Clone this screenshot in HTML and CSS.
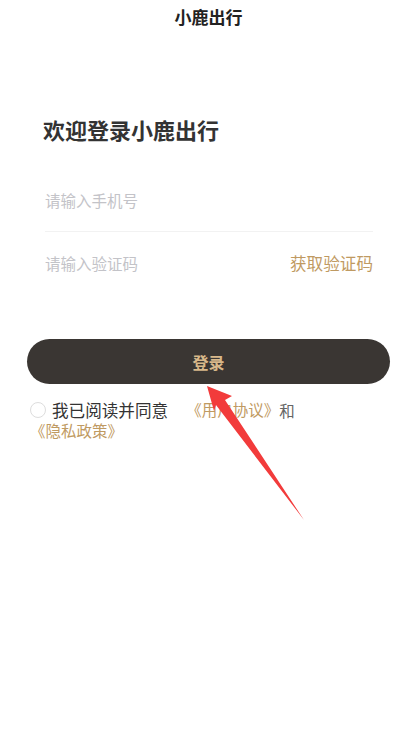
FILE: index.html
```html
<!DOCTYPE html>
<html lang="zh-CN">

<head>
    <meta charset="UTF-8">
    <meta name="viewport" content="width=device-width, initial-scale=1.0">
    <title>小鹿出行</title>
    <link rel="stylesheet" href="styles.css">
</head>

<body>
    <div class="navbar">小鹿出行</div>

    <div class="login">
        <h1 class="welcome">欢迎登录小鹿出行</h1>

        <div class="field">
            <input type="tel" placeholder="请输入手机号">
        </div>
        <div class="field">
            <input type="text" placeholder="请输入验证码">
            <span class="get-code">获取验证码</span>
        </div>

        <button class="login-btn">登录</button>

        <div class="agree">
            <div class="agree-line">
                <span class="radio"></span><span class="agree-text">我已阅读并同意</span><a class="link first">《用户协议》</a><span class="and">和</span>
            </div>
            <a class="link">《隐私政策》</a>
        </div>
    </div>

    <!-- red annotation arrow on top of the screenshot -->
    <svg class="arrow" width="417" height="737" viewBox="0 0 417 737">
        <polygon points="207,386 232,396 225,400 304,520 216,405 214,411" fill="#f23b3b" />
    </svg>
</body>

</html>
```

FILE: styles.css
```css
body {
    margin: 0;
    background: #fff;
    font-family: "Noto Sans CJK SC", "Noto Sans", sans-serif;
    color: #333;
}

.navbar {
    height: 34px;
    line-height: 34px;
    text-align: center;
    font-size: 17px;
    font-weight: bold;
    color: #222;
}

.login {
    padding: 0 27px;
}

.welcome {
    margin: 77px 0 0 16px;
    font-size: 22px;
    line-height: 36px;
    font-weight: bold;
    color: #333;
}

.field {
    display: flex;
    align-items: center;
    margin: 0 17px 0 18px;
    height: 62px;
}

.field:first-of-type {
    margin-top: 22px;
    border-bottom: 1px solid #f2f2f2;
}

.field input {
    flex: 1;
    border: none;
    outline: none;
    padding: 0;
    font-family: inherit;
    font-size: 15.5px;
    color: #333;
    background: transparent;
}

.field input::placeholder {
    color: #c3c3c8;
}

.get-code {
    font-size: 16.6px;
    color: #bf9a62;
}

.login-btn {
    display: block;
    width: 363px;
    height: 45px;
    margin: 45px 0 0 0;
    border: none;
    border-radius: 23px;
    background: #3a3633;
    color: #d8b88a;
    font-family: inherit;
    font-size: 16px;
    font-weight: bold;
}

.agree {
    margin: 17px 0 0 3px;
}

.agree-line {
    display: flex;
    align-items: center;
    height: 17px;
}

.radio {
    width: 14px;
    height: 14px;
    border: 1px solid #ddd;
    border-radius: 50%;
    margin-right: 6px;
}

.agree-text {
    font-size: 16.6px;
    color: #333;
}

.link {
    display: inline-block;
    color: #bf9a62;
    font-size: 15.5px;
    line-height: 17px;
}

.link.first {
    margin-left: 18px;
}

.and {
    color: #666;
    font-size: 15.5px;
}

.arrow {
    position: absolute;
    left: 0;
    top: 0;
    pointer-events: none;
}
```
